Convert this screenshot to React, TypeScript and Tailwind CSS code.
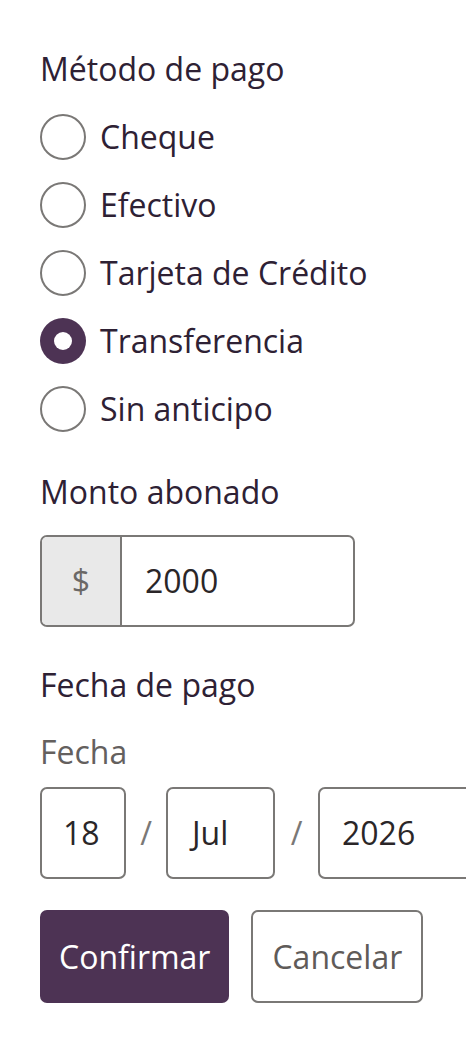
import { useState } from "react";

const METODOS = ["Cheque", "Efectivo", "Tarjeta de Crédito", "Transferencia", "Sin anticipo"];

function Radio({ checked }: { checked: boolean }) {
  return checked ? (
    <span className="flex size-[46px] shrink-0 items-center justify-center rounded-full bg-[#4d3354]">
      <span className="size-[18px] rounded-full bg-white" />
    </span>
  ) : (
    <span className="size-[46px] shrink-0 rounded-full border-2 border-[#7a7876] bg-white" />
  );
}

export default function App() {
  const [metodo, setMetodo] = useState("Transferencia");

  return (
    <div
      className="min-h-[1044px] w-full overflow-hidden bg-white pl-[40px] pt-[45px] text-[32px] text-[#2e2134]"
      style={{ fontFamily: "'Open Sans', 'Noto Sans', sans-serif" }}
    >
      <h2 className="h-[48px] leading-[48px]">Método de pago</h2>

      <div className="mt-[10px] flex flex-col">
        {METODOS.map((m) => (
          <label
            key={m}
            className="flex h-[68px] cursor-pointer items-center gap-[14px]"
            onClick={() => setMetodo(m)}
          >
            <Radio checked={metodo === m} />
            <span>{m}</span>
          </label>
        ))}
      </div>

      <h2 className="mt-[25px] h-[48px] leading-[48px]">Monto abonado</h2>

      <div className="mt-[19px] flex h-[92px] w-[315px] overflow-hidden rounded-[7px] border-2 border-[#7a7876]">
        <span className="flex w-[80px] items-center justify-center border-r-2 border-[#7a7876] bg-[#e9e9e9] text-[#6b6866]">
          $
        </span>
        <span className="flex flex-1 items-center pl-[23px] text-[#2a2628]">2000</span>
      </div>

      <h2 className="mt-[34px] h-[48px] leading-[48px]">Fecha de pago</h2>
      <p className="mt-[19px] h-[48px] leading-[48px] text-[#64605e]">Fecha</p>

      <div className="mt-[11px] flex h-[92px] items-stretch">
        <span className="flex w-[86px] shrink-0 items-center rounded-[7px] border-2 border-[#7a7876] pl-[21px] text-[#2a2628]">
          18
        </span>
        <span className="flex w-[40px] shrink-0 items-center justify-center text-[#7a7876]">/</span>
        <span className="flex w-[109px] shrink-0 items-center rounded-[7px] border-2 border-[#7a7876] pl-[24px] text-[#2a2628]">
          Jul
        </span>
        <span className="flex w-[43px] shrink-0 items-center justify-center text-[#7a7876]">/</span>
        <span className="flex w-[170px] shrink-0 items-center rounded-[7px] border-2 border-[#7a7876] pl-[22px] text-[#2a2628]">
          2026
        </span>
      </div>

      <div className="mt-[31px] flex h-[93px] gap-[22px]">
        <button
          type="button"
          className="rounded-[7px] bg-[#4d3354] px-[19px] text-white"
        >
          Confirmar
        </button>
        <button
          type="button"
          className="rounded-[7px] border-2 border-[#7a7876] bg-white px-[19px] text-[#5f5b59]"
        >
          Cancelar
        </button>
      </div>
    </div>
  );
}
